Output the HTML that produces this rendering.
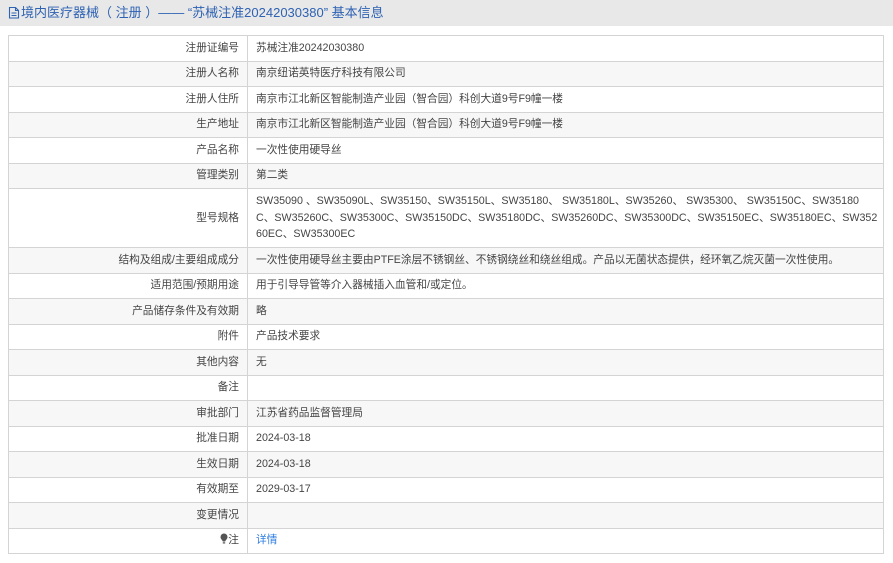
<!DOCTYPE html>
<html><head><meta charset="utf-8">
<style>
*{margin:0;padding:0;box-sizing:border-box}
html,body{width:893px;height:563px;background:#fff;overflow:hidden;font-family:"Liberation Sans","Noto Sans CJK SC",sans-serif;}
.hd{position:absolute;left:0;top:0;width:893px;height:26px;background:#e8e8e8;color:#2e62b3;font-size:13px;line-height:25px;padding-left:8px;white-space:nowrap}
.hd svg{vertical-align:-2px;margin-right:1px}
table{position:absolute;left:8px;top:35px;width:876px;table-layout:fixed;border-collapse:collapse;font-size:10.7px;color:#444;border:1.5px solid #d0d0d0}
td{border:1px solid #d4d4d4;height:25.5px;line-height:16.7px;padding:0 8px;vertical-align:middle;overflow:hidden}
td.l{text-align:right;color:#444}
tr:nth-child(even) td{background:#f7f7f7}
a{color:#2f7de1;text-decoration:none}
</style></head><body>
<div class="hd"><svg width="12" height="13" viewBox="0 0 12 13"><path d="M1.5 1.5h6l3 3v7.5h-9z M7.5 1.5v3h3 M3.5 7h5 M3.5 9.5h5" fill="none" stroke="#2e62b3" stroke-width="1.1"/></svg>境内医疗器械（ 注册 ）—— “苏械注准20242030380” 基本信息</div>
<table>
<colgroup><col style="width:239px"><col></colgroup>
<tr><td class="l">注册证编号</td><td>苏械注准20242030380</td></tr>
<tr><td class="l">注册人名称</td><td>南京纽诺英特医疗科技有限公司</td></tr>
<tr><td class="l">注册人住所</td><td>南京市江北新区智能制造产业园（智合园）科创大道9号F9幢一楼</td></tr>
<tr><td class="l">生产地址</td><td>南京市江北新区智能制造产业园（智合园）科创大道9号F9幢一楼</td></tr>
<tr><td class="l">产品名称</td><td>一次性使用硬导丝</td></tr>
<tr><td class="l">管理类别</td><td>第二类</td></tr>
<tr><td class="l" style="height:59px">型号规格</td><td style="white-space:nowrap">SW35090 、SW35090L、SW35150、SW35150L、SW35180、 SW35180L、SW35260、 SW35300、 SW35150C、SW35180<br>C、SW35260C、SW35300C、SW35150DC、SW35180DC、SW35260DC、SW35300DC、SW35150EC、SW35180EC、SW352<br>60EC、SW35300EC</td></tr>
<tr><td class="l">结构及组成/主要组成成分</td><td>一次性使用硬导丝主要由PTFE涂层不锈钢丝、不锈钢绕丝和绕丝组成。产品以无菌状态提供，经环氧乙烷灭菌一次性使用。</td></tr>
<tr><td class="l">适用范围/预期用途</td><td>用于引导导管等介入器械插入血管和/或定位。</td></tr>
<tr><td class="l">产品储存条件及有效期</td><td>略</td></tr>
<tr><td class="l">附件</td><td>产品技术要求</td></tr>
<tr><td class="l">其他内容</td><td>无</td></tr>
<tr><td class="l">备注</td><td></td></tr>
<tr><td class="l">审批部门</td><td>江苏省药品监督管理局</td></tr>
<tr><td class="l">批准日期</td><td>2024-03-18</td></tr>
<tr><td class="l">生效日期</td><td>2024-03-18</td></tr>
<tr><td class="l">有效期至</td><td>2029-03-17</td></tr>
<tr><td class="l">变更情况</td><td></td></tr>
<tr><td class="l"><svg width="8" height="11" viewBox="0 0 8 11" style="vertical-align:-1px"><path d="M4 0.5a3.5 3.5 0 0 1 3.5 3.5c0 2-2 3-2.3 4.5h-2.4C2.5 7 0.5 6 0.5 4A3.5 3.5 0 0 1 4 0.5z M2.8 9.3h2.4v1.2H2.8z" fill="#555"/></svg>注</td><td><a>详情</a></td></tr>
</table>
</body></html>
